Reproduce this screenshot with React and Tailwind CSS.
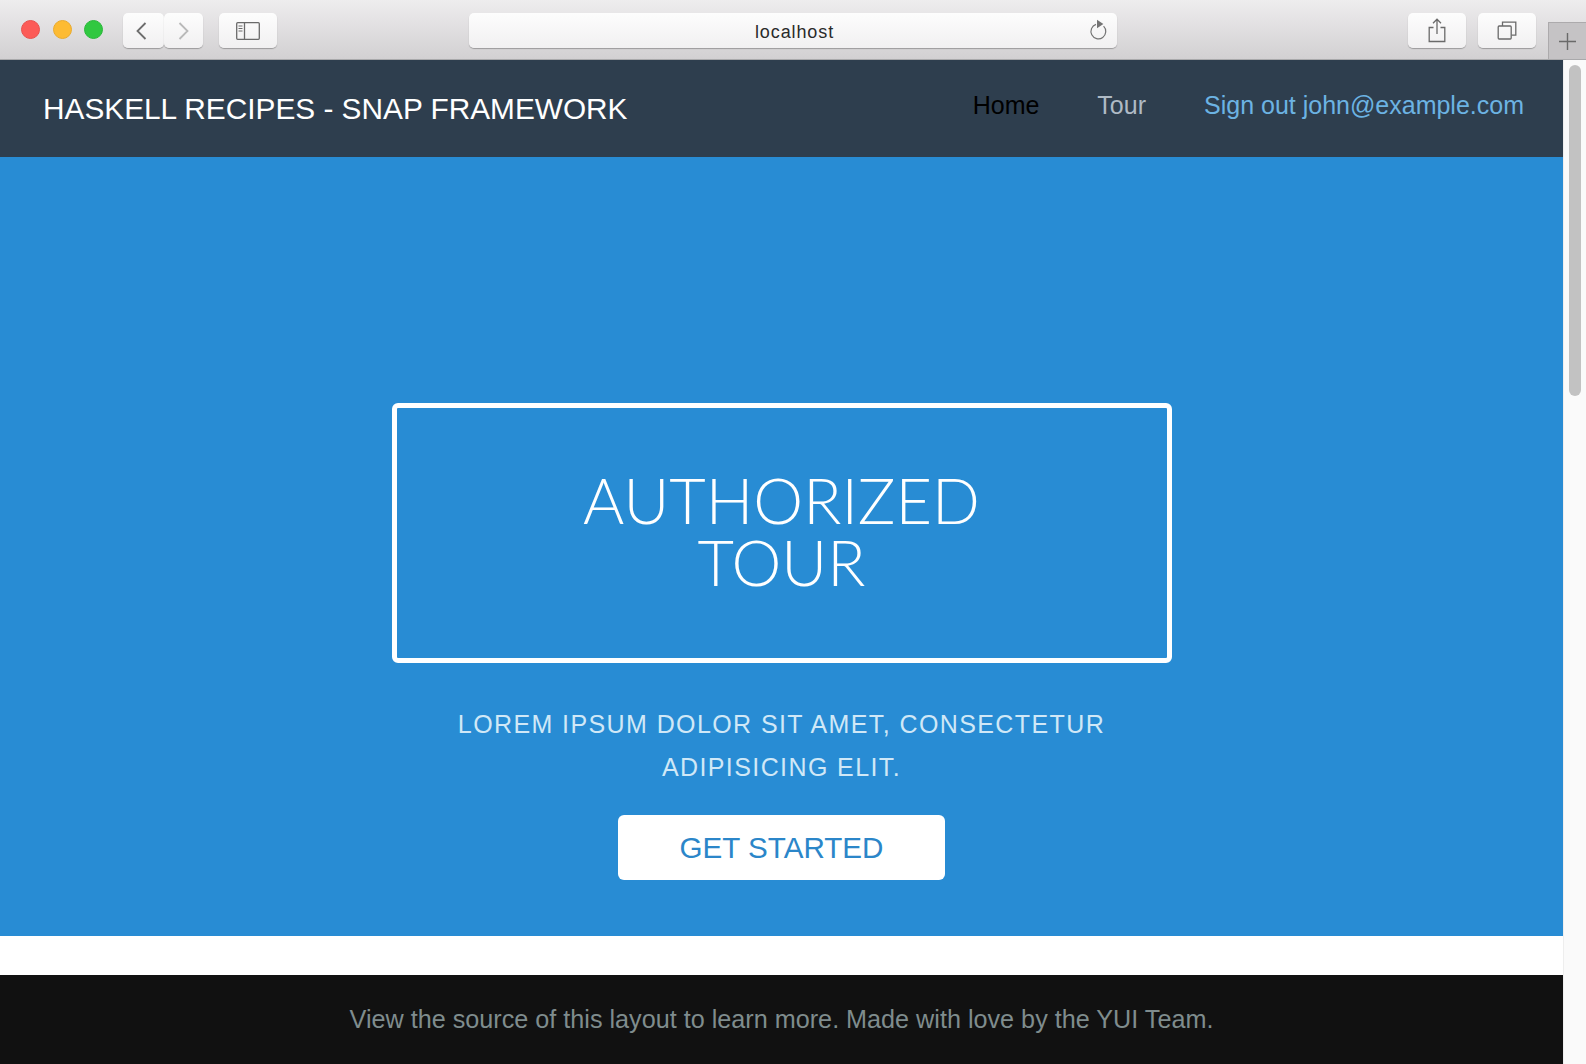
// Safari window mock with the pure.css style landing page inside
const SANS = 'font-["Liberation_Sans",Arial,sans-serif]'

function ToolButton({ className = '', children }) {
  return (
    <div className={`h-[35px] flex items-center justify-center bg-gradient-to-b from-[#fdfdfd] to-[#f1f0f1] rounded-[5px] shadow-[0_1px_1px_rgba(0,0,0,0.28)] ${className}`}>
      {children}
    </div>
  )
}

function Toolbar() {
  return (
    <div className="relative h-[60px] shrink-0 flex items-start pt-[13px] pl-[21px] bg-gradient-to-b from-[#eeedee] to-[#d2d0d2] border-b border-[#a9a9ab]">
      <div className="flex gap-[12.5px] mt-[7px]">
        <span className="w-[19px] h-[19px] rounded-full bg-[#fc5b57] border border-[#e8514d]" />
        <span className="w-[19px] h-[19px] rounded-full bg-[#fdbb33] border border-[#e9ab2f]" />
        <span className="w-[19px] h-[19px] rounded-full bg-[#30c840] border border-[#2ab83a]" />
      </div>
      <div className="flex ml-[20px]">
        <ToolButton className="w-[41px] pr-[6px]">
          <svg width="14" height="20" viewBox="0 0 14 20" fill="none" stroke="#6d6d6d" strokeWidth="1.8"><path d="M11.5 2 3.5 10l8 8" /></svg>
        </ToolButton>
        <ToolButton className="w-[39px]">
          <svg width="14" height="20" viewBox="0 0 14 20" fill="none" stroke="#b9b9b9" strokeWidth="1.8"><path d="m2.5 2 8 8-8 8" /></svg>
        </ToolButton>
      </div>
      <ToolButton className="w-[58px] ml-[16px]">
        <svg width="24" height="18" viewBox="0 0 24 18" fill="none" stroke="#6a6a6a" strokeWidth="1.3">
          <rect x=".7" y=".7" width="22.6" height="16.6" rx="1" />
          <path d="M8.5 1v16" />
          <path d="M2.5 4h4M2.5 6.5h4M2.5 9h4" strokeWidth="1" />
        </svg>
      </ToolButton>
      <ToolButton className={`w-[648px] ml-[192px] pt-[3px] pl-[3px] relative text-[18px] tracking-[0.9px] text-[#2a2a2a] ${SANS}`}>
        localhost
        <svg className="absolute right-[9px] top-[6px]" width="20" height="23" viewBox="0 0 20 23" fill="none" stroke="#747474" strokeWidth="1.2">
          <path d="M8 5.4a7.4 7.4 0 1 0 7.6 1.8" />
          <path d="M9 .8 15.4 5 9 9.2z" fill="#747474" stroke="none" />
        </svg>
      </ToolButton>
      <ToolButton className="w-[58px] ml-[291px]">
        <svg width="20" height="25" viewBox="0 0 20 25" fill="none" stroke="#6a6a6a" strokeWidth="1.3">
          <path d="M6.5 9.5H2.2v14h15.6v-14h-4.3" />
          <path d="M10 16V1.5M6 5.2l4-4 4 4" />
        </svg>
      </ToolButton>
      <ToolButton className="w-[58px] ml-[12px]">
        <svg width="20" height="19" viewBox="0 0 20 19" fill="none" stroke="#6a6a6a" strokeWidth="1.3">
          <rect x="1.2" y="5" width="13" height="13" rx="1" />
          <path d="M5.5 5V1.2h13.3v13H14.5" />
        </svg>
      </ToolButton>
      <div className="absolute right-0 bottom-0 w-[38px] h-[37px] flex items-center justify-center bg-[#c5c3c5] border-l border-t border-[#acaaac]">
        <svg width="19" height="19" viewBox="0 0 19 19" stroke="#6a6a6a" strokeWidth="1.4"><path d="M9.5 1v17M1 9.5h17" /></svg>
      </div>
    </div>
  )
}

function Nav() {
  return (
    <div className={`h-[97px] shrink-0 flex items-start justify-between bg-[#2e3e4e] pl-[43px] pr-[39px] ${SANS}`}>
      <a className="mt-[31px] text-[29.8px] leading-[36px] text-white">HASKELL RECIPES - SNAP FRAMEWORK</a>
      <div className="flex gap-[58px] mt-[27px] text-[25px] leading-[36px]">
        <a className="text-black">Home</a>
        <a className="text-[#afbac5]">Tour</a>
        <a className="text-[#6cb3e3]">Sign out john@example.com</a>
      </div>
    </div>
  )
}

function Hero() {
  return (
    <div className="h-[779px] shrink-0 flex flex-col items-center bg-[#288cd4] pt-[246px]">
      <div className="w-[780px] h-[260px] flex items-center justify-center border-[5px] border-white rounded-[6px] text-center pb-[4px]">
        <h1 className="font-['Lato',sans-serif] font-light text-[63px] leading-[62.5px] text-white">AUTHORIZED<br />TOUR</h1>
      </div>
      <p className={`w-[780px] mt-[40px] text-center uppercase text-[25px] leading-[42.5px] tracking-[1.4px] text-[#d0e8f7] ${SANS}`}>
        Lorem ipsum dolor sit amet, consectetur<br />adipisicing elit.
      </p>
      <a className={`mt-[27px] pt-[2px] w-[327px] h-[65px] flex items-center justify-center bg-white rounded-[6px] text-[29.6px] text-[#2b86c9] ${SANS}`}>GET STARTED</a>
    </div>
  )
}

function Footer() {
  return (
    <div className={`h-[89px] shrink-0 flex items-start justify-center bg-[#111111] pt-[26px] text-[25.2px] leading-[36px] text-[#7f8c8d] ${SANS}`}>
      View the source of this layout to learn more. Made with love by the YUI Team.
    </div>
  )
}

export default function App() {
  return (
    <div className="h-[1064px] w-[1586px] overflow-hidden flex flex-col bg-white">
      <Toolbar />
      <div className="flex flex-1 min-h-0">
        <div className="w-[1563px] shrink-0 flex flex-col">
          <Nav />
          <Hero />
          <div className="h-[39px] shrink-0 bg-white" />
          <Footer />
        </div>
        <div className="flex-1 bg-[#fafafa] border-l border-[#eeeeee] pt-[5px] pl-[5px]">
          <div className="w-[12px] h-[331px] rounded-full bg-[#c2c2c2]" />
        </div>
      </div>
    </div>
  )
}
